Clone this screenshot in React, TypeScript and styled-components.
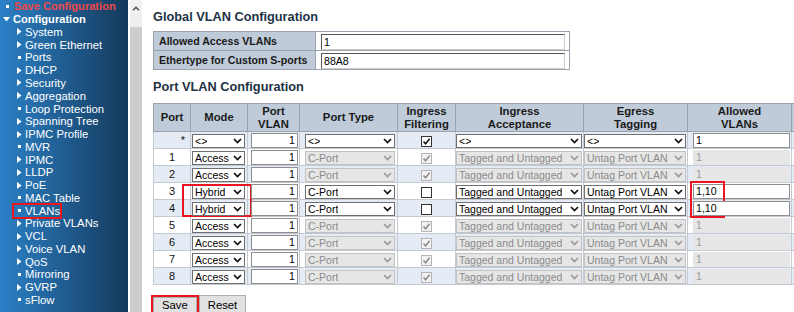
import React from 'react';
import styled, { createGlobalStyle } from 'styled-components';

const GlobalStyle = createGlobalStyle`
  html, body { margin: 0; padding: 0; background: #fff; }
  body {
    font-family: "Liberation Sans", Arial, sans-serif;
    width: 794px;
    height: 312px;
    overflow: hidden;
  }
`;

const Page = styled.div`
  display: flex;
  height: 312px;
  overflow: hidden;
`;

/* ---------- Sidebar ---------- */
const Sidebar = styled.nav`
  width: 128px;
  flex: none;
  background: linear-gradient(to right, #2c80c6, #14395b);
  color: #fff;
  font-size: 11.3px;
  overflow: hidden;
`;

const NavRow = styled.div<{ $level: number }>`
  position: relative;
  display: flex;
  align-items: center;
  height: 12.78px;
  padding-left: ${p => (p.$level === 0 ? 6 : p.$level === 1 ? 3 : 17)}px;
  white-space: nowrap;
`;

const NavIcon = styled.span<{ $w: number }>`
  display: flex;
  align-items: center;
  justify-content: center;
  width: ${p => p.$w}px;
  flex: none;
`;

const Dot = styled.span`
  width: 3px;
  height: 3px;
  background: #fff;
`;

const NavText = styled.span<{ $tone: 'save' | 'head' | 'item' }>`
  margin-left: ${p => (p.$tone === 'save' ? 5 : 3)}px;
  font-size: ${p => (p.$tone === 'item' ? 11.3 : 11.1)}px;
  font-weight: ${p => (p.$tone === 'item' ? 400 : 700)};
  color: ${p => (p.$tone === 'save' ? '#f04848' : '#fff')};
`;

const NavOutline = styled.span`
  position: absolute;
  left: 12px;
  top: -1px;
  width: 50px;
  height: 16px;
  box-sizing: border-box;
  border: 2px solid #e8161e;
`;

const Gutter = styled.div`
  width: 2px;
  flex: none;
  background: #fff;
`;

const Scrollbar = styled.div`
  width: 12px;
  flex: none;
  background: #f0f0f0;
  display: flex;
  flex-direction: column;
`;

const ScrollButton = styled.div`
  height: 17px;
  display: flex;
  align-items: center;
  justify-content: center;
`;

const ScrollTrack = styled.div`
  flex: 1;
  display: flex;
  padding-top: 10px;
`;

const ScrollThumb = styled.div`
  flex: 1;
  background: #cdcdcd;
`;

/* ---------- Main ---------- */
const Main = styled.main`
  flex: 1;
  min-width: 0;
  padding-left: 11px;
  overflow: hidden;
`;

const Heading = styled.h1<{ $top: number; $bottom: number }>`
  margin: ${p => p.$top}px 0 ${p => p.$bottom}px;
  font-size: 12.75px;
  line-height: 15px;
  font-weight: 700;
  color: #223246;
  white-space: nowrap;
`;

const GlobalTable = styled.table`
  border-collapse: collapse;
  table-layout: fixed;
  width: 416px;
  border: 1px solid #000;
`;

const LabelCell = styled.th`
  height: 16.5px;
  padding: 0 0 0 5px;
  border: 1px solid #9aa3ad;
  background: #bfcbd8;
  font-size: 10.6px;
  font-weight: 700;
  color: #1a1a1a;
  text-align: left;
  white-space: nowrap;
`;

const ValueCell = styled.td`
  padding: 0 4px 0 5px;
  border: 1px solid #9aa3ad;
  background: #fff;
`;

const WideInput = styled.input`
  box-sizing: border-box;
  width: 100%;
  height: 16px;
  margin: 0;
  padding: 0 2px;
  border: 1px solid;
  border-color: #555 #ccc #ccc #555;
  font-family: inherit;
  font-size: 10.6px;
  color: #000;
  background: #fff;
  outline: none;
`;

const PortTable = styled.table`
  border-collapse: collapse;
  table-layout: fixed;
  width: 742px;
  border: 1px solid #000;
`;

const HeadCell = styled.th`
  height: 27px;
  padding: 0 2px;
  border: 1px solid #9aa3ad;
  background: #bfcbd8;
  font-size: 11.3px;
  line-height: 12.6px;
  font-weight: 700;
  color: #1a1a1a;
  text-align: center;
  vertical-align: middle;
`;

const Row = styled.tr<{ $shade: boolean }>`
  background: ${p => (p.$shade ? '#e4ebf4' : '#fff')};
`;

const Cell = styled.td<{ $align?: 'left' | 'center' | 'right'; $pr?: number }>`
  position: relative;
  height: 16px;
  padding: 0 ${p => p.$pr ?? 1}px 0 0;
  border: 1px solid #c4cad1;
  text-align: ${p => p.$align ?? 'right'};
  vertical-align: middle;
  font-size: 11px;
  color: #111;
  line-height: 14px;
  white-space: nowrap;
`;

const SelectBox = styled.div<{ $w: number; $disabled?: boolean }>`
  display: inline-flex;
  align-items: center;
  justify-content: space-between;
  box-sizing: border-box;
  width: ${p => p.$w}px;
  height: 14px;
  padding: 0 2px 0 2px;
  border: 1px solid ${p => (p.$disabled ? '#c2c2c2' : '#6f6f6f')};
  background: ${p => (p.$disabled ? '#e6e6e6' : '#fff')};
  color: ${p => (p.$disabled ? '#8a8a8a' : '#000')};
  font-size: 10.5px;
  line-height: 12px;
  vertical-align: middle;
  text-align: left;
  overflow: hidden;
`;

const SelectText = styled.span`
  overflow: hidden;
  white-space: nowrap;
`;

const FieldInput = styled.input<{ $w: number; $align: 'left' | 'right' }>`
  box-sizing: border-box;
  width: ${p => p.$w}px;
  height: 15px;
  margin: 0;
  padding: 0 2px;
  vertical-align: middle;
  border: 1px solid #8f8f8f;
  background: #fff;
  color: #000;
  font-family: inherit;
  font-size: 10.6px;
  text-align: ${p => p.$align};
  outline: none;
  &:disabled {
    background: #e6e6e6;
    border-color: #e6e6e6;
    color: #9a9a9a;
  }
`;

const CheckBox = styled.span<{ $disabled?: boolean }>`
  display: inline-flex;
  align-items: center;
  justify-content: center;
  box-sizing: border-box;
  width: 11px;
  height: 11px;
  vertical-align: middle;
  border: 1px solid ${p => (p.$disabled ? '#b4b4b4' : '#333')};
  background: ${p => (p.$disabled ? '#f2f2f2' : '#fff')};
`;

const Mark = styled.span`
  position: absolute;
  box-sizing: border-box;
  border: 2px solid #e8161e;
  pointer-events: none;
`;

const Actions = styled.div`
  display: flex;
  align-items: flex-start;
  margin: 10px 0 0 -2px;
`;

const SaveFrame = styled.span`
  display: inline-flex;
  border: 2px solid #e8161e;
`;

const Button = styled.button<{ $h: number }>`
  height: ${p => p.$h}px;
  margin: 0;
  padding: 0 8px;
  border: 1px solid #adadad;
  background: #e1e1e1;
  font-family: inherit;
  font-size: 11.3px;
  line-height: 13px;
  color: #000;
`;

/* ---------- Pieces ---------- */
const Chevron = ({ color }: { color: string }) => (
  <svg width="9" height="6" viewBox="0 0 9 6" style={{ flex: 'none' }}>
    <path d="M1 1 L4.5 4.6 L8 1" fill="none" stroke={color} strokeWidth="1.7" />
  </svg>
);

const Select = ({ w, value, disabled }: { w: number; value: string; disabled?: boolean }) => (
  <SelectBox $w={w} $disabled={disabled}>
    <SelectText>{value}</SelectText>
    <Chevron color={disabled ? '#9a9a9a' : '#111'} />
  </SelectBox>
);

const Check = ({ checked, disabled }: { checked: boolean; disabled?: boolean }) => (
  <CheckBox $disabled={disabled}>
    {checked && (
      <svg width="9" height="9" viewBox="0 0 9 9">
        <path d="M1.5 4.5 L3.6 6.8 L7.6 1.8" fill="none" stroke={disabled ? '#8a8a8a' : '#111'} strokeWidth="1.5" />
      </svg>
    )}
  </CheckBox>
);

type NavItem = { label: string; kind: 'arrow' | 'dot'; active?: boolean };
const navItems: NavItem[] = [
  { label: 'System', kind: 'arrow' },
  { label: 'Green Ethernet', kind: 'arrow' },
  { label: 'Ports', kind: 'dot' },
  { label: 'DHCP', kind: 'arrow' },
  { label: 'Security', kind: 'arrow' },
  { label: 'Aggregation', kind: 'arrow' },
  { label: 'Loop Protection', kind: 'dot' },
  { label: 'Spanning Tree', kind: 'arrow' },
  { label: 'IPMC Profile', kind: 'arrow' },
  { label: 'MVR', kind: 'dot' },
  { label: 'IPMC', kind: 'arrow' },
  { label: 'LLDP', kind: 'arrow' },
  { label: 'PoE', kind: 'arrow' },
  { label: 'MAC Table', kind: 'dot' },
  { label: 'VLANs', kind: 'dot', active: true },
  { label: 'Private VLANs', kind: 'arrow' },
  { label: 'VCL', kind: 'arrow' },
  { label: 'Voice VLAN', kind: 'arrow' },
  { label: 'QoS', kind: 'arrow' },
  { label: 'Mirroring', kind: 'dot' },
  { label: 'GVRP', kind: 'arrow' },
  { label: 'sFlow', kind: 'dot' },
];

type PortRow = {
  port: string;
  mode: string;
  hybrid: boolean;
  all?: boolean;
  allowed: string;
};

const rows: PortRow[] = [
  { port: '*', mode: '<>', hybrid: true, all: true, allowed: '1' },
  { port: '1', mode: 'Access', hybrid: false, allowed: '1' },
  { port: '2', mode: 'Access', hybrid: false, allowed: '1' },
  { port: '3', mode: 'Hybrid', hybrid: true, allowed: '1,10' },
  { port: '4', mode: 'Hybrid', hybrid: true, allowed: '1,10' },
  { port: '5', mode: 'Access', hybrid: false, allowed: '1' },
  { port: '6', mode: 'Access', hybrid: false, allowed: '1' },
  { port: '7', mode: 'Access', hybrid: false, allowed: '1' },
  { port: '8', mode: 'Access', hybrid: false, allowed: '1' },
];

const cols = [37, 57, 52, 98, 58, 128, 104, 104, 104];

export default function App() {
  return (
    <>
      <GlobalStyle />
      <Page>
        <Sidebar>
          <NavRow $level={0}>
            <NavIcon $w={3}><Dot /></NavIcon>
            <NavText $tone="save">Save Configuration</NavText>
          </NavRow>
          <NavRow $level={1}>
            <NavIcon $w={7}>
              <svg width="7" height="5" viewBox="0 0 7 5"><path d="M0 0 H7 L3.5 4.5 Z" fill="#fff" /></svg>
            </NavIcon>
            <NavText $tone="head">Configuration</NavText>
          </NavRow>
          {navItems.map(item => (
            <NavRow key={item.label} $level={2}>
              <NavIcon $w={5}>
                {item.kind === 'dot' ? (
                  <Dot />
                ) : (
                  <svg width="5" height="7" viewBox="0 0 5 7"><path d="M0 0 L4.5 3.5 L0 7 Z" fill="#fff" /></svg>
                )}
              </NavIcon>
              <NavText $tone="item">{item.label}</NavText>
              {item.active && <NavOutline />}
            </NavRow>
          ))}
        </Sidebar>
        <Gutter />
        <Scrollbar>
          <ScrollButton>
            <svg width="8" height="5" viewBox="0 0 8 5"><path d="M1 4.2 L4 1.2 L7 4.2" fill="none" stroke="#505050" strokeWidth="1.5" /></svg>
          </ScrollButton>
          <ScrollTrack><ScrollThumb /></ScrollTrack>
        </Scrollbar>
        <Main>
          <Heading $top={9} $bottom={7}>Global VLAN Configuration</Heading>
          <GlobalTable>
            <colgroup><col style={{ width: 162 }} /><col style={{ width: 254 }} /></colgroup>
            <tbody>
              <tr>
                <LabelCell>Allowed Access VLANs</LabelCell>
                <ValueCell><WideInput defaultValue="1" /></ValueCell>
              </tr>
              <tr>
                <LabelCell>Ethertype for Custom S-ports</LabelCell>
                <ValueCell><WideInput defaultValue="88A8" /></ValueCell>
              </tr>
            </tbody>
          </GlobalTable>
          <Heading $top={9} $bottom={9}>Port VLAN Configuration</Heading>
          <PortTable>
            <colgroup>
              {cols.map((w, i) => <col key={i} style={{ width: w }} />)}
            </colgroup>
            <thead>
              <tr>
                <HeadCell>Port</HeadCell>
                <HeadCell>Mode</HeadCell>
                <HeadCell>Port<br />VLAN</HeadCell>
                <HeadCell>Port Type</HeadCell>
                <HeadCell>Ingress<br />Filtering</HeadCell>
                <HeadCell>Ingress<br />Acceptance</HeadCell>
                <HeadCell>Egress<br />Tagging</HeadCell>
                <HeadCell>Allowed<br />VLANs</HeadCell>
                <HeadCell />
              </tr>
            </thead>
            <tbody>
              {rows.map((r, i) => {
                const off = !r.hybrid;
                return (
                  <Row key={r.port} $shade={i % 2 === 0}>
                    <Cell $align={r.all ? 'right' : 'center'} $pr={r.all ? 5 : 0}>{r.port}</Cell>
                    <Cell $pr={2}>
                      <Select w={53} value={r.mode} />
                      {r.port === '3' && <Mark style={{ left: -9, top: 1, width: 70, height: 33 }} />}
                    </Cell>
                    <Cell $pr={1}><FieldInput $w={47} $align="right" defaultValue="1" /></Cell>
                    <Cell $pr={2}><Select w={90} value={r.all ? '<>' : 'C-Port'} disabled={off} /></Cell>
                    <Cell $align="center" $pr={0}><Check checked={r.all || off} disabled={off} /></Cell>
                    <Cell $pr={1}><Select w={126} value={r.all ? '<>' : 'Tagged and Untagged'} disabled={off} /></Cell>
                    <Cell $pr={1}><Select w={102} value={r.all ? '<>' : 'Untag Port VLAN'} disabled={off} /></Cell>
                    <Cell $pr={1}>
                      <FieldInput $w={97} $align="left" defaultValue={r.allowed} disabled={off} />
                      {r.port === '3' && <Mark style={{ left: 2, top: -2, width: 35, height: 37 }} />}
                    </Cell>
                    <Cell $pr={1}><FieldInput $w={97} $align="left" defaultValue="" disabled={off} /></Cell>
                  </Row>
                );
              })}
            </tbody>
          </PortTable>
          <Actions>
            <SaveFrame><Button $h={17}>Save</Button></SaveFrame>
            <Button $h={21}>Reset</Button>
          </Actions>
        </Main>
      </Page>
    </>
  );
}
